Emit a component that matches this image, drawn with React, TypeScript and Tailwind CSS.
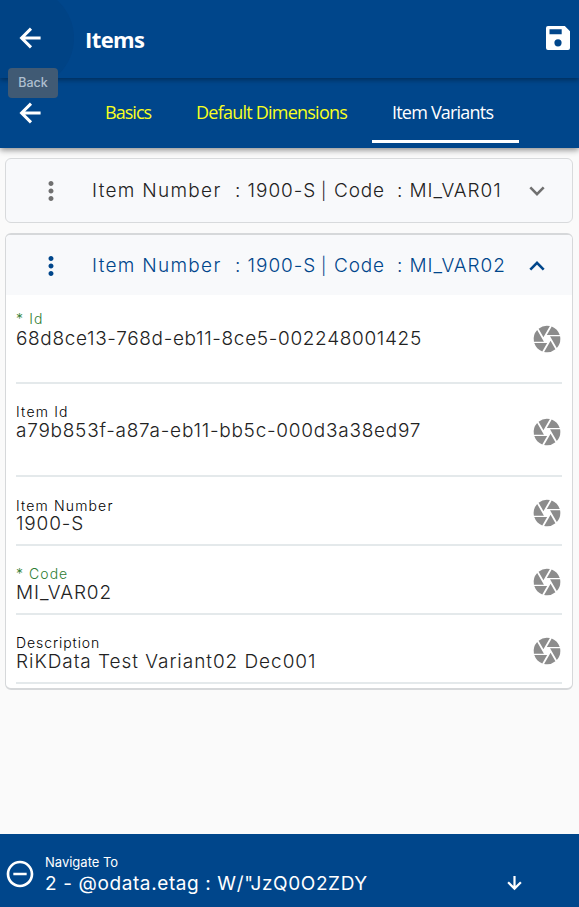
import React from "react";
import { MdCamera, MdMoreVert, MdRemoveCircleOutline } from "react-icons/md";

function BackArrow() {
  return (
    <svg width="22" height="22" viewBox="0 0 22 22" fill="none" stroke="white" strokeWidth="3" className="shrink-0">
      <path d="M12 1.6 2.6 11l9.4 9.4M2.6 11H21.6" />
    </svg>
  );
}

function SaveIcon() {
  return (
    <svg width="24" height="24" viewBox="0 0 24 24" className="shrink-0">
      <path
        fill="white"
        fillRule="evenodd"
        d="M2 0H18.8L24 5.2V22a2 2 0 0 1-2 2H2a2 2 0 0 1-2-2V2a2 2 0 0 1 2-2ZM3.5 3.2V8.2H15.7V3.2ZM12 13.2a3.6 3.6 0 1 0 0 7.2 3.6 3.6 0 0 0 0-7.2Z"
      />
    </svg>
  );
}

function Chevron({ up }: { up?: boolean }) {
  return (
    <svg width="16" height="10" viewBox="0 0 16 10" fill="none" stroke="currentColor" strokeWidth="2.6" className="shrink-0">
      <path d={up ? "M1.3 8.6 8 1.9l6.7 6.7" : "M1.3 1.4 8 8.1l6.7-6.7"} />
    </svg>
  );
}

function PanelTitle({ code }: { code: string }) {
  return (
    <div className="flex w-[437px] whitespace-pre text-[19px] leading-6">
      <span className="w-[143px] tracking-[1.3px]">Item Number</span>
      <span className="w-[86px] tracking-[0.95px]">: 1900-S</span>
      <span className="w-[13px] text-[17px]">|</span>
      <span className="w-[63px] tracking-[0.8px]">Code</span>
      <span className="tracking-[0.92px]">: {code}</span>
    </div>
  );
}

interface FieldProps {
  label: string;
  value: string;
  required?: boolean;
  rowClass: string;
  labelClass: string;
  valueClass: string;
  iconClass: string;
}

function Field({ label, value, required, rowClass, labelClass, valueClass, iconClass }: FieldProps) {
  return (
    <div className={"mx-[10px] flex justify-between border-b-2 border-[#e4e9eb] " + rowClass}>
      <div className="flex flex-col whitespace-nowrap">
        <span className={"text-[14px] leading-[18px] " + (required ? "text-[#2e7d32] " : "text-black ") + labelClass}>
          {required ? "* " : ""}
          {label}
        </span>
        <span className={"text-[19px] leading-5 text-[#222] " + valueClass}>{value}</span>
      </div>
      <MdCamera size={32} className={"-mr-px shrink-0 text-[#8c8c8c] " + iconClass} />
    </div>
  );
}

export default function App() {
  return (
    <div className="flex h-[907px] w-[579px] flex-col overflow-hidden bg-[#fafafa] font-['Inter',sans-serif] font-light">
      <header className="relative z-20 flex h-[78px] shrink-0 items-center bg-[#00468b] pb-0.5 pl-[19px] pr-[9px] font-['Open_Sans',sans-serif] text-white shadow-[0_2px_5px_rgba(0,0,0,0.35)]">
        <div className="absolute inset-0 overflow-hidden">
          <div className="absolute -left-[28px] -top-[13px] h-[102px] w-[102px] rounded-full bg-[#004385]" />
        </div>
        <div className="relative">
          <BackArrow />
        </div>
        <h1 className="relative ml-[44px] mt-[2px] grow text-[22px] font-bold leading-7 tracking-[-0.6px]">Items</h1>
        <div className="relative">
          <SaveIcon />
        </div>
        <div className="absolute left-2 top-[68px] flex h-[30px] w-[50px] items-center justify-center rounded bg-[#405a74] font-['Inter',sans-serif] text-[12.5px] font-medium text-[#aebfd0]">
          Back
        </div>
      </header>
      <nav className="relative z-10 flex h-[70px] shrink-0 bg-[#00468b] pl-[19px] font-['Open_Sans',sans-serif] text-[18px] font-normal leading-[69px] text-[#f8ff20] shadow-[0_2px_6px_rgba(0,0,0,0.45)]">
        <div className="pt-6">
          <BackArrow />
        </div>
        <span className="ml-[64px] w-[91px] tracking-[-0.95px]">Basics</span>
        <span className="w-[176px] whitespace-nowrap tracking-[-0.77px]">Default Dimensions</span>
        <span className="h-[65px] w-[147px] whitespace-nowrap border-b-[3px] border-white pl-5 tracking-[-0.8px] text-white">
          Item Variants
        </span>
      </nav>
      <main className="flex grow flex-col gap-[10px] px-[5px] pr-[6px] pt-[10px]">
        <section className="flex h-[65px] shrink-0 items-center rounded-md border-[1.5px] border-[#d8dadc] bg-[#f8f9fb] pl-[30px] text-[#222]">
          <MdMoreVert size={30} className="mr-[26px] shrink-0 text-[#707070]" />
          <PanelTitle code="MI_VAR01" />
          <span className="text-[#707070]">
            <Chevron />
          </span>
        </section>
        <section className="flex h-[457px] shrink-0 flex-col rounded-md border border-b-2 border-t-2 border-[#d6d8da] bg-white">
          <div className="flex h-[60px] shrink-0 items-center rounded-t bg-[#f8f9fb] pl-[30px] pt-0.5 text-[#00468b]">
            <MdMoreVert size={30} className="mr-[26px] shrink-0" />
            <PanelTitle code="MI_VAR02" />
            <Chevron up />
          </div>
          <Field required label="Id" value="68d8ce13-768d-eb11-8ce5-002248001425" rowClass="h-[89px] pt-[15px]" labelClass="tracking-[1.1px]" valueClass="pt-px tracking-[0.66px]" iconClass="mt-[13px]" />
          <Field label="Item Id" value="a79b853f-a87a-eb11-bb5c-000d3a38ed97" rowClass="h-[93px] pt-[19px]" labelClass="tracking-[1.2px]" valueClass="tracking-[0.75px]" iconClass="mt-[13px]" />
          <Field label="Item Number" value="1900-S" rowClass="h-[69px] pt-[20px]" labelClass="tracking-[1.15px]" valueClass="-mt-px tracking-[0.85px]" iconClass="mt-0" />
          <Field required label="Code" value="MI_VAR02" rowClass="h-[69px] pt-[19px]" labelClass="tracking-[1.05px]" valueClass="tracking-[0.9px]" iconClass="mt-[1px]" />
          <Field label="Description" value="RiKData Test Variant02 Dec001" rowClass="h-[69px] pt-[19px]" labelClass="tracking-[0.92px]" valueClass="tracking-[0.95px]" iconClass="mt-[1px]" />
        </section>
      </main>
      <footer className="flex h-[73px] shrink-0 bg-[#00468b] pl-1 text-white">
        <MdRemoveCircleOutline size={32} className="mt-6 shrink-0" />
        <div className="ml-[9px] mt-[19px] flex w-[461px] flex-col whitespace-nowrap font-normal">
          <span className="text-[13px] leading-[18px]">Navigate To</span>
          <span className="mt-px text-[19px] leading-6 tracking-[0.61px]">2 - @odata.etag : W/"JzQ0O2ZDY</span>
        </div>
        <svg width="16" height="16" viewBox="0 0 16 16" fill="none" stroke="white" strokeWidth="2.2" className="mt-[41px]">
          <path d="M8.5 1v12M2.1 7.2l6.4 6.4 6.4-6.4" />
        </svg>
      </footer>
    </div>
  );
}
